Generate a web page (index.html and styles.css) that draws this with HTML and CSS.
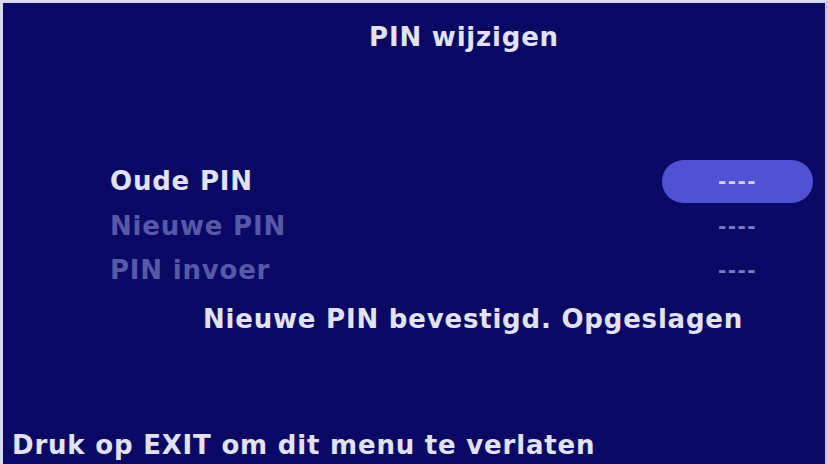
FILE: index.html
```html
<!DOCTYPE html>
<html lang="nl">
<head>
<meta charset="utf-8">
<title>PIN wijzigen</title>
<link rel="stylesheet" href="styles.css">
</head>
<body>
<div class="screen">
  <div class="title">PIN wijzigen</div>
  <div class="rows">
    <div class="row active">
      <span class="label">Oude PIN</span>
      <span class="value">----</span>
    </div>
    <div class="row">
      <span class="label">Nieuwe PIN</span>
      <span class="value">----</span>
    </div>
    <div class="row">
      <span class="label">PIN invoer</span>
      <span class="value">----</span>
    </div>
  </div>
  <div class="status">Nieuwe PIN bevestigd. Opgeslagen</div>
  <div class="footer">Druk op EXIT om dit menu te verlaten</div>
</div>
</body>
</html>
```

FILE: styles.css
```css
html, body {
  margin: 0;
  padding: 0;
  background: #0a0a66;
}

.screen {
  box-sizing: border-box;
  width: 828px;
  height: 464px;
  background: #0a0a66;
  border-top: 3px solid #d8d8ee;
  border-left: 3px solid #d8d8ee;
  border-right: 3px solid #c8c8e6;
  display: flex;
  flex-direction: column;
  font-family: "DejaVu Sans", "Liberation Sans", sans-serif;
  font-weight: bold;
  font-size: 26px;
  letter-spacing: 0.8px;
  color: #e2e2f4;
}

.title {
  margin-top: 19px;
  line-height: 30px;
  text-align: center;
  padding-left: 100px;
}

.rows {
  margin-top: 107px;
  display: flex;
  flex-direction: column;
}

.row {
  height: 44.5px;
  display: flex;
  align-items: center;
  line-height: 44px;
}

.label {
  padding-left: 107px;
  flex: 1;
  color: #5858a8;
}

.value {
  width: 151px;
  height: 43px;
  margin-right: 12px;
  border-radius: 22px;
  display: flex;
  align-items: center;
  justify-content: center;
  font-size: 20px;
  letter-spacing: 1.5px;
  color: #7a7ac6;
}

.row.active .label {
  color: #e2e2f4;
}

.row.active .value {
  background: #5151d6;
  color: #d6d6ff;
}

.status {
  margin-top: 11px;
  line-height: 30px;
  padding-left: 200px;
}

.footer {
  margin-top: auto;
  margin-bottom: 4px;
  line-height: 30px;
  padding-left: 9px;
}
```
